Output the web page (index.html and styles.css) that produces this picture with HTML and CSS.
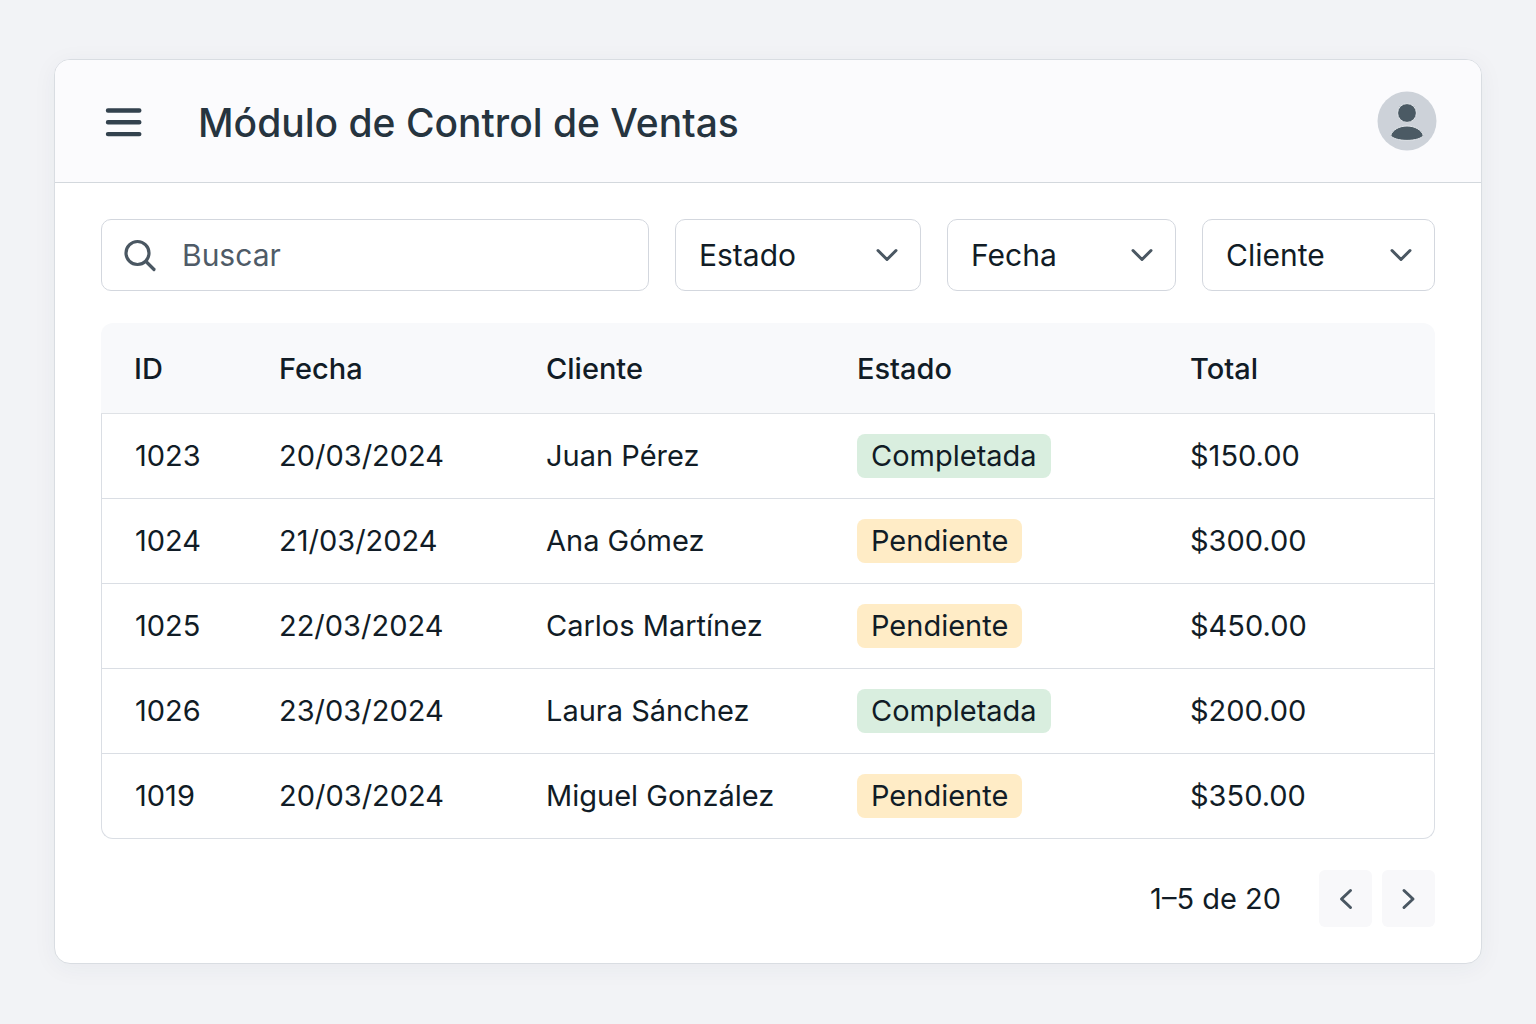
FILE: index.html
```html
<!DOCTYPE html>
<html lang="es">
<head>
  <meta charset="utf-8">
  <meta name="viewport" content="width=device-width, initial-scale=1">
  <title>Módulo de Control de Ventas</title>
  <link rel="stylesheet" href="styles.css">
</head>
<body>
  <div class="card">
    <header class="card-header">
      <button class="menu-button" type="button" aria-label="Menú">
        <svg width="37" height="32" viewBox="0 0 37 32" fill="none" stroke="#33424e" stroke-width="4.4" stroke-linecap="round">
          <path d="M3 5.500H34.300M3 17.300H34.300M3 29.100H34.300"/>
        </svg>
      </button>
      <h1 class="title">Módulo de Control de Ventas</h1>
      <button class="avatar" type="button" aria-label="Cuenta">
        <svg width="60" height="60" viewBox="0 0 60 60">
          <circle cx="30" cy="30" r="29.5" fill="#cdd2d9"/>
          <g fill="#4b5a64" stroke="#e3e7eb" stroke-width="1">
            <circle cx="30" cy="22" r="9.400"/>
            <path d="M13.800 44.200C15.500 39 22 35 30 35S44.500 39 46.200 44.200C45.500 47.200 38 49.400 30 49.400S14.500 47.200 13.800 44.200Z"/>
          </g>
        </svg>
      </button>
    </header>

    <main class="content">
      <form class="filters">
        <label class="search">
          <svg class="search-icon" width="36" height="36" viewBox="0 0 36 36" fill="none" stroke="#4a5762" stroke-width="3.200" stroke-linecap="round">
            <circle cx="15.500" cy="16" r="11.500"/>
            <path d="M24 24.500L32 32.500"/>
          </svg>
          <input type="search" placeholder="Buscar" aria-label="Buscar">
        </label>
        <div class="select">
          <select aria-label="Estado"><option>Estado</option></select>
          <svg class="chevron" width="24" height="16" viewBox="0 0 24 16"><path d="M3 3.500L12 12.500L21 3.500"/></svg>
        </div>
        <div class="select">
          <select aria-label="Fecha"><option>Fecha</option></select>
          <svg class="chevron" width="24" height="16" viewBox="0 0 24 16"><path d="M3 3.500L12 12.500L21 3.500"/></svg>
        </div>
        <div class="select">
          <select aria-label="Cliente"><option>Cliente</option></select>
          <svg class="chevron" width="24" height="16" viewBox="0 0 24 16"><path d="M3 3.500L12 12.500L21 3.500"/></svg>
        </div>
      </form>

      <table class="sales">
        <colgroup>
          <col class="col-id"><col class="col-date"><col class="col-client"><col class="col-status"><col class="col-total">
        </colgroup>
        <thead>
          <tr><th scope="col">ID</th><th scope="col">Fecha</th><th scope="col">Cliente</th><th scope="col">Estado</th><th scope="col">Total</th></tr>
        </thead>
        <tbody>
          <tr><td>1023</td><td>20/03/2024</td><td>Juan Pérez</td><td><span class="badge done">Completada</span></td><td>$150.00</td></tr>
          <tr><td>1024</td><td>21/03/2024</td><td>Ana Gómez</td><td><span class="badge pending">Pendiente</span></td><td>$300.00</td></tr>
          <tr><td>1025</td><td>22/03/2024</td><td>Carlos Martínez</td><td><span class="badge pending">Pendiente</span></td><td>$450.00</td></tr>
          <tr><td>1026</td><td>23/03/2024</td><td>Laura Sánchez</td><td><span class="badge done">Completada</span></td><td>$200.00</td></tr>
          <tr><td>1019</td><td>20/03/2024</td><td>Miguel González</td><td><span class="badge pending">Pendiente</span></td><td>$350.00</td></tr>
        </tbody>
      </table>

      <nav class="pagination" aria-label="Paginación">
        <span class="range">1–5 de 20</span>
        <div class="pager">
          <button type="button" aria-label="Anterior">
            <svg width="16" height="24" viewBox="0 0 16 24"><path d="M12.500 3.500L3.500 12L12.500 20.500"/></svg>
          </button>
          <button type="button" aria-label="Siguiente">
            <svg width="16" height="24" viewBox="0 0 16 24"><path d="M3 3.500L12 12L3 20.500"/></svg>
          </button>
        </div>
      </nav>
    </main>
  </div>
</body>
</html>
```
FILE: styles.css
```css
* {
  box-sizing: border-box;
}

body {
  margin: 0;
  min-height: 100vh;
  padding: 59px 54px;
  background: #f2f3f6;
  color: #111c26;
  font-family: Inter, "Liberation Sans", sans-serif;
  font-size: 29px;
  line-height: 36px;
}

button {
  padding: 0;
  border: 0;
  background: none;
  cursor: pointer;
}

svg {
  display: block;
}

.card {
  overflow: hidden;
  border: 1px solid #d9dde2;
  border-radius: 16px;
  background: #fff;
  box-shadow: 0 4px 24px rgba(40, 55, 75, 0.05);
}

.card-header {
  display: flex;
  align-items: center;
  padding: 31px 44px 31px 50px;
  border-bottom: 1px solid #d3d8dd;
  background: #fbfbfd;
}

.title {
  flex: 1;
  margin: 0 0 0 56px;
  padding-top: 4px;
  color: #26343f;
  font-size: 39px;
  font-weight: 500;
  line-height: 48px;
}

.content {
  padding: 36px 46px;
}

.filters {
  display: grid;
  grid-template-columns: 548fr 246fr 229fr 233fr;
  gap: 26px;
  margin-bottom: 32px;
  font-size: 30px;
}

.search,
.select {
  display: flex;
  align-items: center;
  position: relative;
  min-width: 0;
  height: 72px;
  border: 1px solid #d3d7de;
  border-radius: 10px;
  background: #fff;
}

.search {
  gap: 24px;
  padding: 0 20px;
}

.search-icon {
  flex: none;
}

.search input {
  flex: 1;
  min-width: 0;
  padding: 0;
  border: 0;
  outline: 0;
  background: none;
  color: inherit;
  font: inherit;
}

.search input::placeholder {
  color: #4f5b67;
  opacity: 1;
}

.select select {
  width: 100%;
  height: 100%;
  padding: 0 56px 0 23px;
  border: 0;
  outline: 0;
  appearance: none;
  background: none;
  color: inherit;
  font: inherit;
}

.chevron {
  position: absolute;
  right: 21px;
  fill: none;
  stroke: #4a5762;
  stroke-width: 3;
  stroke-linecap: round;
  stroke-linejoin: round;
  pointer-events: none;
}

.sales {
  width: 100%;
  table-layout: fixed;
  border-collapse: separate;
  border-spacing: 0;
}

.col-id { width: 145px; }
.col-date { width: 267px; }
.col-client { width: 311px; }
.col-status { width: 333px; }
.col-total { width: 278px; }

.sales th,
.sales td {
  padding: 0 0 0 33px;
  text-align: left;
}

.sales th {
  height: 91px;
  padding-top: 2px;
  border-bottom: 1px solid #dfe2e6;
  background: #f8f9fb;
  font-weight: 500;
}

.sales td {
  height: 85px;
  border-bottom: 1px solid #dadee4;
}

.sales td:first-child {
  border-left: 1px solid #dadee4;
}

.sales td:last-child {
  border-right: 1px solid #dadee4;
}

.sales th:first-child { border-top-left-radius: 12px; }
.sales th:last-child { border-top-right-radius: 12px; }
.sales tr:last-child td:first-child { border-bottom-left-radius: 12px; }
.sales tr:last-child td:last-child { border-bottom-right-radius: 12px; }

.badge {
  display: inline-block;
  padding: 4px 14px;
  border-radius: 8px;
  vertical-align: middle;
}

.done { background: #d9eedf; }
.pending { background: #ffecc6; }

.pagination {
  display: flex;
  align-items: center;
  justify-content: flex-end;
  gap: 38px;
  margin-top: 31px;
}

.pager {
  display: flex;
  gap: 10px;
}

.pager button {
  display: grid;
  place-items: center;
  width: 53px;
  height: 57px;
  border-radius: 6px;
  background: #f8f8fa;
}

.pager svg {
  fill: none;
  stroke: #4a5762;
  stroke-width: 3;
  stroke-linecap: round;
  stroke-linejoin: round;
}
```
